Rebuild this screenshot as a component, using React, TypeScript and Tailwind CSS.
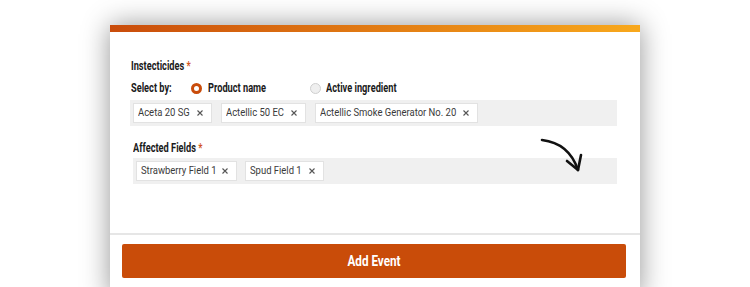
import React from "react";

function Cond({ children, w, s = "scale-x-[0.71]" }: { children: React.ReactNode; w: string; s?: string }) {
  return (
    <span className={`inline-block shrink-0 overflow-visible whitespace-nowrap ${w}`}>
      <span className={`inline-block origin-left whitespace-nowrap ${s}`}>{children}</span>
    </span>
  );
}

function X() {
  return (
    <svg width="6" height="6" viewBox="0 0 6 6" className="shrink-0">
      <path d="M0.5 0.5 L5.5 5.5 M5.5 0.5 L0.5 5.5" stroke="#555" strokeWidth="1.1" />
    </svg>
  );
}

function Tag({ label, w }: { label: string; w: string }) {
  return (
    <div className="flex h-[20px] shrink-0 items-center border border-[#e2e2e2] bg-white pl-[4px] pr-[8px] text-[11px] text-[#3a3a3a] font-['Roboto',sans-serif]">
      <Cond w={w} s="scale-x-[0.86]">{label}</Cond>
      <span className="ml-[8px] flex">
        <X />
      </span>
    </div>
  );
}

const bold = "font-['Roboto',sans-serif] font-bold text-[13px] text-[#1a1a1a]";

export default function App() {
  return (
    <div className="h-[287px] w-[750px] overflow-hidden bg-white pt-[25px]">
      <div className="relative mx-auto w-[530px] bg-white shadow-[0_0_26px_rgba(0,0,0,0.42)]">
        <div className="h-[7px] bg-gradient-to-r from-[#c94c0b] to-[#f8a81c]" />
        <div className="pl-[21px] pr-[23px] pt-[26px]">
          <div className={`flex h-[16px] items-center leading-[16px] ${bold}`}>
            <Cond w="w-[62px]">
              Instecticides <span className="text-[#d2541a]">*</span>
            </Cond>
          </div>
          <div className={`mt-[6px] flex h-[16px] items-center ${bold}`}>
            <Cond w="w-[41px]">Select by:</Cond>
            <span className="ml-[19px] box-border h-[11px] w-[11px] shrink-0 rounded-full border-[3px] border-[#c94c0b] bg-white" />
            <span className="ml-[6px] flex">
              <Cond w="w-[59px]">Product name</Cond>
            </span>
            <span className="ml-[43px] box-border h-[11px] w-[11px] shrink-0 rounded-full border border-[#cfcfcf] bg-[#efefef]" />
            <span className="ml-[5px] flex">
              <Cond w="w-[75px]">Active ingredient</Cond>
            </span>
          </div>
          <div className="ml-[-1px] mt-[4px] flex gap-[9px] bg-[#f0f0f0] p-[3px]">
            <Tag label="Aceta 20 SG" w="w-[51px]" />
            <Tag label="Actellic 50 EC" w="w-[57px]" />
            <Tag label="Actellic Smoke Generator No. 20" w="w-[135px]" />
          </div>
          <div className="ml-[2px]">
            <div className={`mt-[14px] flex h-[16px] items-center leading-[16px] ${bold}`}>
              <Cond w="w-[62px]">
                Affected Fields <span className="text-[#d2541a]">*</span>
              </Cond>
            </div>
            <div className="mt-[2px] flex gap-[8px] bg-[#f0f0f0] p-[3px]">
              <Tag label="Strawberry Field 1" w="w-[73px]" />
              <Tag label="Spud Field 1" w="w-[51px]" />
            </div>
          </div>
        </div>
        <svg
          className="absolute left-[425px] top-[108px]"
          width="50"
          height="45"
          viewBox="0 0 50 45"
        >
          <path d="M7 7 C24 9 37 19 43 37" stroke="#111" strokeWidth="2.6" fill="none" strokeLinecap="round" />
          <path d="M32 28 L43 37 L46 22" stroke="#111" strokeWidth="2.6" fill="none" strokeLinecap="round" strokeLinejoin="round" />
        </svg>
        <div className="mt-[49px] h-[2px] bg-[#e6e6e6]" />
        <div className="ml-[12px] mr-[14px] mt-[9px] pb-[20px]">
          <button className="flex h-[34px] w-full items-center justify-center rounded-[2px] bg-[#c94c09] font-['Roboto',sans-serif] text-[15px] font-bold text-white">
            <span className="inline-block scale-x-[0.78] whitespace-nowrap">Add Event</span>
          </button>
        </div>
      </div>
    </div>
  );
}
